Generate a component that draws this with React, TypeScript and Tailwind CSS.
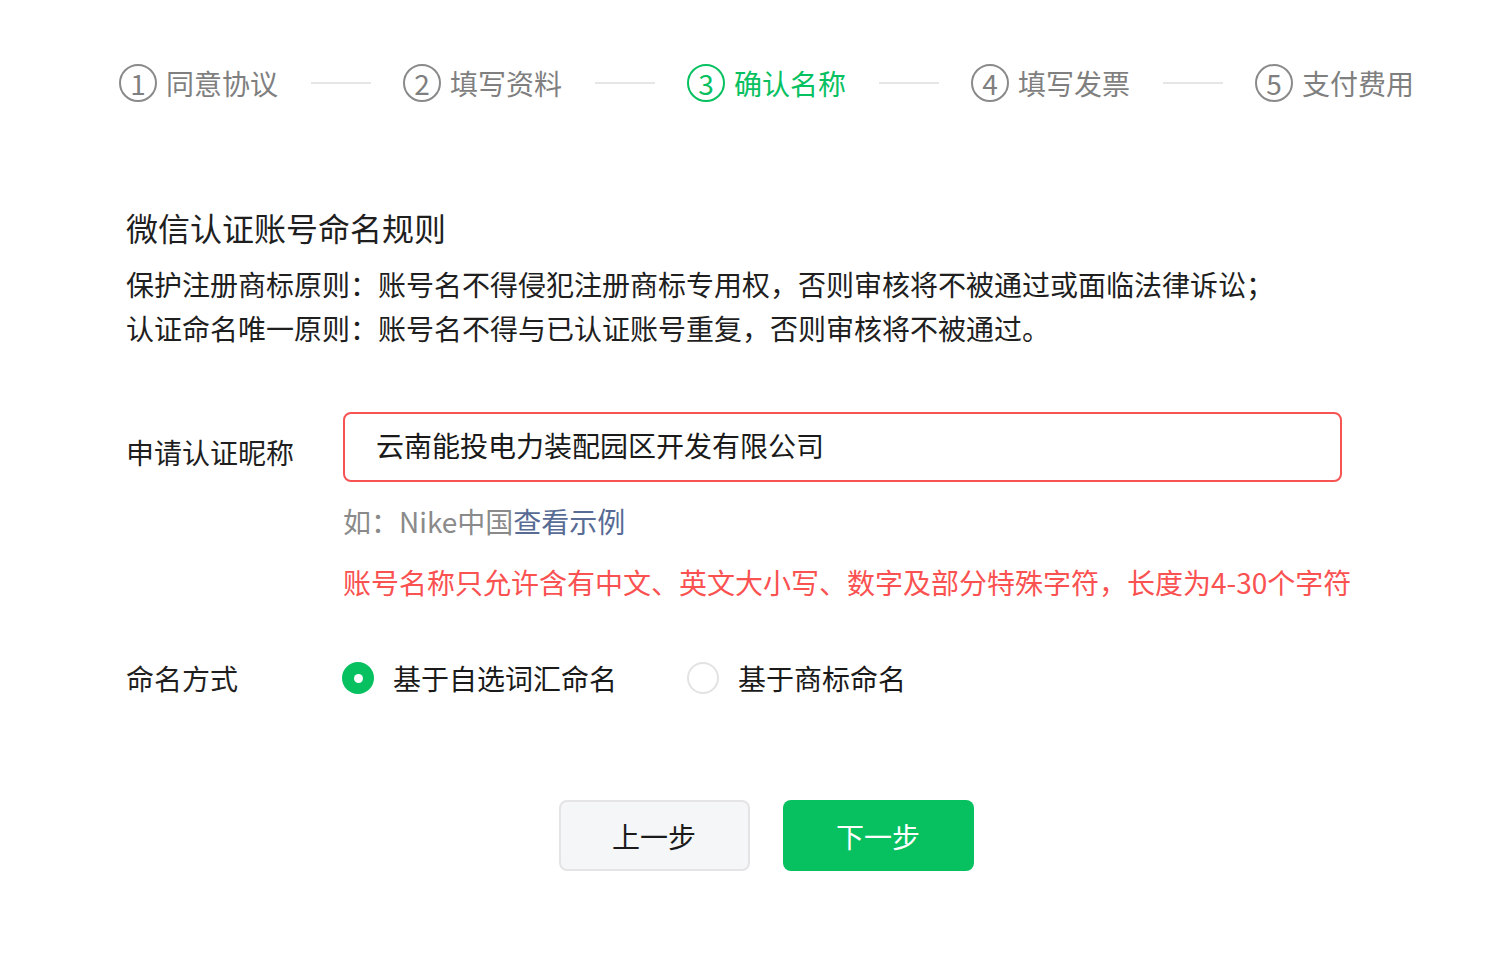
const font = { fontFamily: '"Noto Sans CJK SC", "Noto Sans", sans-serif' };

const steps = [
  { n: 1, label: '同意协议' },
  { n: 2, label: '填写资料' },
  { n: 3, label: '确认名称' },
  { n: 4, label: '填写发票' },
  { n: 5, label: '支付费用' },
];

const CURRENT = 3;

function Step({ n, label }: { n: number; label: string }) {
  const active = n === CURRENT;
  return (
    <div className={`flex shrink-0 items-center gap-[9px] ${active ? 'text-[#07c160]' : 'text-[#7f7f7f]'}`}>
      <div
        className={`flex h-[38px] w-[38px] shrink-0 items-center justify-center rounded-full border-2 text-[28px] leading-none ${
          active ? 'border-[#07c160]' : 'border-[#8a8a8a]'
        }`}
      >
        {n}
      </div>
      <span className="whitespace-nowrap text-[28px] leading-[38px]">{label}</span>
    </div>
  );
}

function Radio({ checked, label }: { checked: boolean; label: string }) {
  return (
    <label className="flex items-center gap-[19px]">
      {checked ? (
        <span className="flex h-[32px] w-[32px] items-center justify-center rounded-full bg-[#07c160]">
          <span className="h-[9px] w-[9px] rounded-full bg-white" />
        </span>
      ) : (
        <span className="h-[32px] w-[32px] rounded-full border-2 border-[#e3e3e3]" />
      )}
      <span className="whitespace-nowrap text-[28px] leading-[40px] text-[#1a1a1a]">{label}</span>
    </label>
  );
}

export default function App() {
  return (
    <div className="min-h-[957px] w-full bg-white pt-[64px]" style={font}>
      <div className="ml-[119px] flex items-center">
        {steps.map((s, i) => (
          <div key={s.n} className="flex shrink-0 items-center">
            {i > 0 && <div className="ml-[33px] mr-[32px] h-[2px] w-[60px] bg-[#e6e6e6]" />}
            <Step n={s.n} label={s.label} />
          </div>
        ))}
      </div>

      <div className="ml-[126px] w-[1280px]">
        <h2 className="mt-[103px] text-[32px] leading-[44px] text-[#1f1f1f]">微信认证账号命名规则</h2>
        <div className="mt-[13px] text-[28px] leading-[44px] text-[#1f1f1f]">
          <p>保护注册商标原则：账号名不得侵犯注册商标专用权，否则审核将不被通过或面临法律诉讼；</p>
          <p>认证命名唯一原则：账号名不得与已认证账号重复，否则审核将不被通过。</p>
        </div>

        <div className="mt-[62px] flex items-start">
          <div className="w-[217px] pt-[20px] text-[28px] leading-[40px] text-[#1f1f1f]">申请认证昵称</div>
          <div className="flex flex-col">
            <div className="flex h-[70px] w-[999px] items-center rounded-[8px] border-2 border-[#f75353] pl-[31px] pb-[4px] text-[28px] text-[#1a1a1a]">
              云南能投电力装配园区开发有限公司
            </div>
            <p className="mt-[19px] text-[28px] leading-[40px] text-[#8a8a8a]">
              如：Nike中国<span className="text-[#576b95]">查看示例</span>
            </p>
            <p className="mt-[21px] whitespace-nowrap text-[28px] leading-[40px] text-[#fa5151]">
              账号名称只允许含有中文、英文大小写、数字及部分特殊字符，长度为4-30个字符
            </p>
          </div>
        </div>

        <div className="mt-[56px] flex items-center">
          <div className="w-[216px] text-[28px] leading-[40px] text-[#1f1f1f]">命名方式</div>
          <div className="flex items-center gap-[70px]">
            <Radio checked label="基于自选词汇命名" />
            <Radio checked={false} label="基于商标命名" />
          </div>
        </div>

        <div className="mt-[102px] flex justify-center gap-[33px]">
          <button
            type="button"
            className="h-[71px] w-[191px] rounded-[8px] border-2 border-[#e4e4e6] bg-[#f5f6f8] text-[28px] text-[#1a1a1a]"
          >
            上一步
          </button>
          <button
            type="button"
            className="h-[71px] w-[191px] rounded-[8px] bg-[#07c160] text-[28px] text-white"
          >
            下一步
          </button>
        </div>
      </div>
    </div>
  );
}
